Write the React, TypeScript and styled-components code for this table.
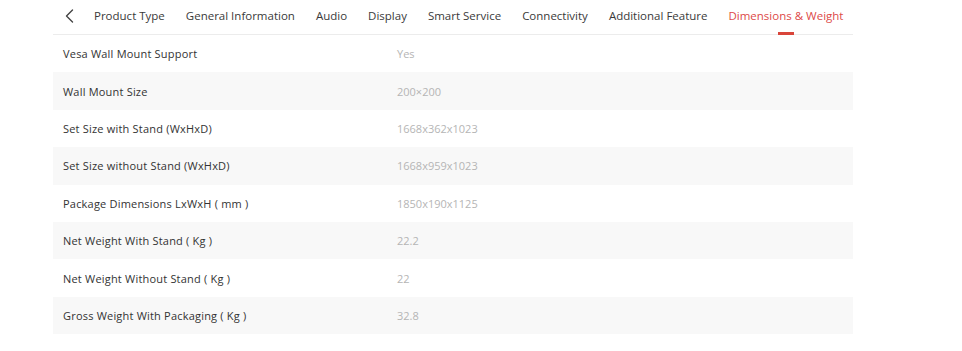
import React, { useState } from "react";
import styled, { createGlobalStyle } from "styled-components";

const tabs = [
  "Product Type",
  "General Information",
  "Audio",
  "Display",
  "Smart Service",
  "Connectivity",
  "Additional Feature",
  "Dimensions & Weight",
];

const specs = [
  { label: "Vesa Wall Mount Support", value: "Yes" },
  { label: "Wall Mount Size", value: "200×200" },
  { label: "Set Size with Stand (WxHxD)", value: "1668x362x1023" },
  { label: "Set Size without Stand (WxHxD)", value: "1668x959x1023" },
  { label: "Package Dimensions LxWxH ( mm )", value: "1850x190x1125" },
  { label: "Net Weight With Stand ( Kg )", value: "22.2" },
  { label: "Net Weight Without Stand ( Kg )", value: "22" },
  { label: "Gross Weight With Packaging ( Kg )", value: "32.8" },
];

const App: React.FunctionComponent = () => {
  const [active, setActive] = useState<string>("Dimensions & Weight");

  return (
    <>
      <GlobalStyle />
      <Wrapper>
        <TabBar>
          <BackBtn aria-label="back">
            <svg width="9" height="14" viewBox="0 0 9 14" fill="none">
              <path
                d="M7.5 1L1.5 7l6 6"
                stroke="#444"
                strokeWidth="1.4"
                strokeLinecap="round"
                strokeLinejoin="round"
              />
            </svg>
          </BackBtn>
          {tabs.map((tab) => (
            <Tab
              key={tab}
              $active={active === tab}
              onClick={() => setActive(tab)}
            >
              {tab}
            </Tab>
          ))}
        </TabBar>
        <SpecTable>
          {specs.map((item, index) => (
            <SpecRow key={index} $shaded={index % 2 === 1}>
              <Label>{item.label}</Label>
              <Value>{item.value}</Value>
            </SpecRow>
          ))}
        </SpecTable>
      </Wrapper>
    </>
  );
};

export default App;

const GlobalStyle = createGlobalStyle`
  body {
    margin: 0;
    background: #fff;
    font-family: "Open Sans", "Liberation Sans", sans-serif;
  }
`;

const Wrapper = styled.div`
  width: 800px;
  margin-left: 53px;
`;

const TabBar = styled.div`
  display: flex;
  align-items: center;
  height: 34px;
  border-bottom: 1px solid #ececec;
  gap: 21px;
`;

const BackBtn = styled.button`
  display: flex;
  align-items: center;
  background: none;
  border: none;
  padding: 0;
  margin-left: 12px;
  margin-right: -1px;
  margin-top: -3px;
  cursor: pointer;
`;

const Tab = styled.div<{ $active: boolean }>`
  position: relative;
  height: 100%;
  display: flex;
  align-items: center;
  padding-bottom: 4px;
  box-sizing: border-box;
  font-size: 11.5px;
  color: ${(p) => (p.$active ? "#dd4a48" : "#3a3a3a")};
  white-space: nowrap;
  cursor: pointer;

  &::after {
    content: "";
    display: ${(p) => (p.$active ? "block" : "none")};
    position: absolute;
    left: 50%;
    bottom: -1px;
    width: 16px;
    height: 3px;
    margin-left: -8px;
    background: #d9453a;
  }
`;

const SpecTable = styled.div`
  display: flex;
  flex-direction: column;
`;

const SpecRow = styled.div<{ $shaded: boolean }>`
  display: grid;
  grid-template-columns: 334px 1fr;
  align-items: center;
  height: 37.4px;
  padding-left: 10px;
  background: ${(p) => (p.$shaded ? "#f8f8f8" : "#fff")};
  font-size: 11px;
`;

const Label = styled.span`
  color: #333;
  letter-spacing: 0.2px;
`;

const Value = styled.span`
  color: #b5b5b5;
`;
